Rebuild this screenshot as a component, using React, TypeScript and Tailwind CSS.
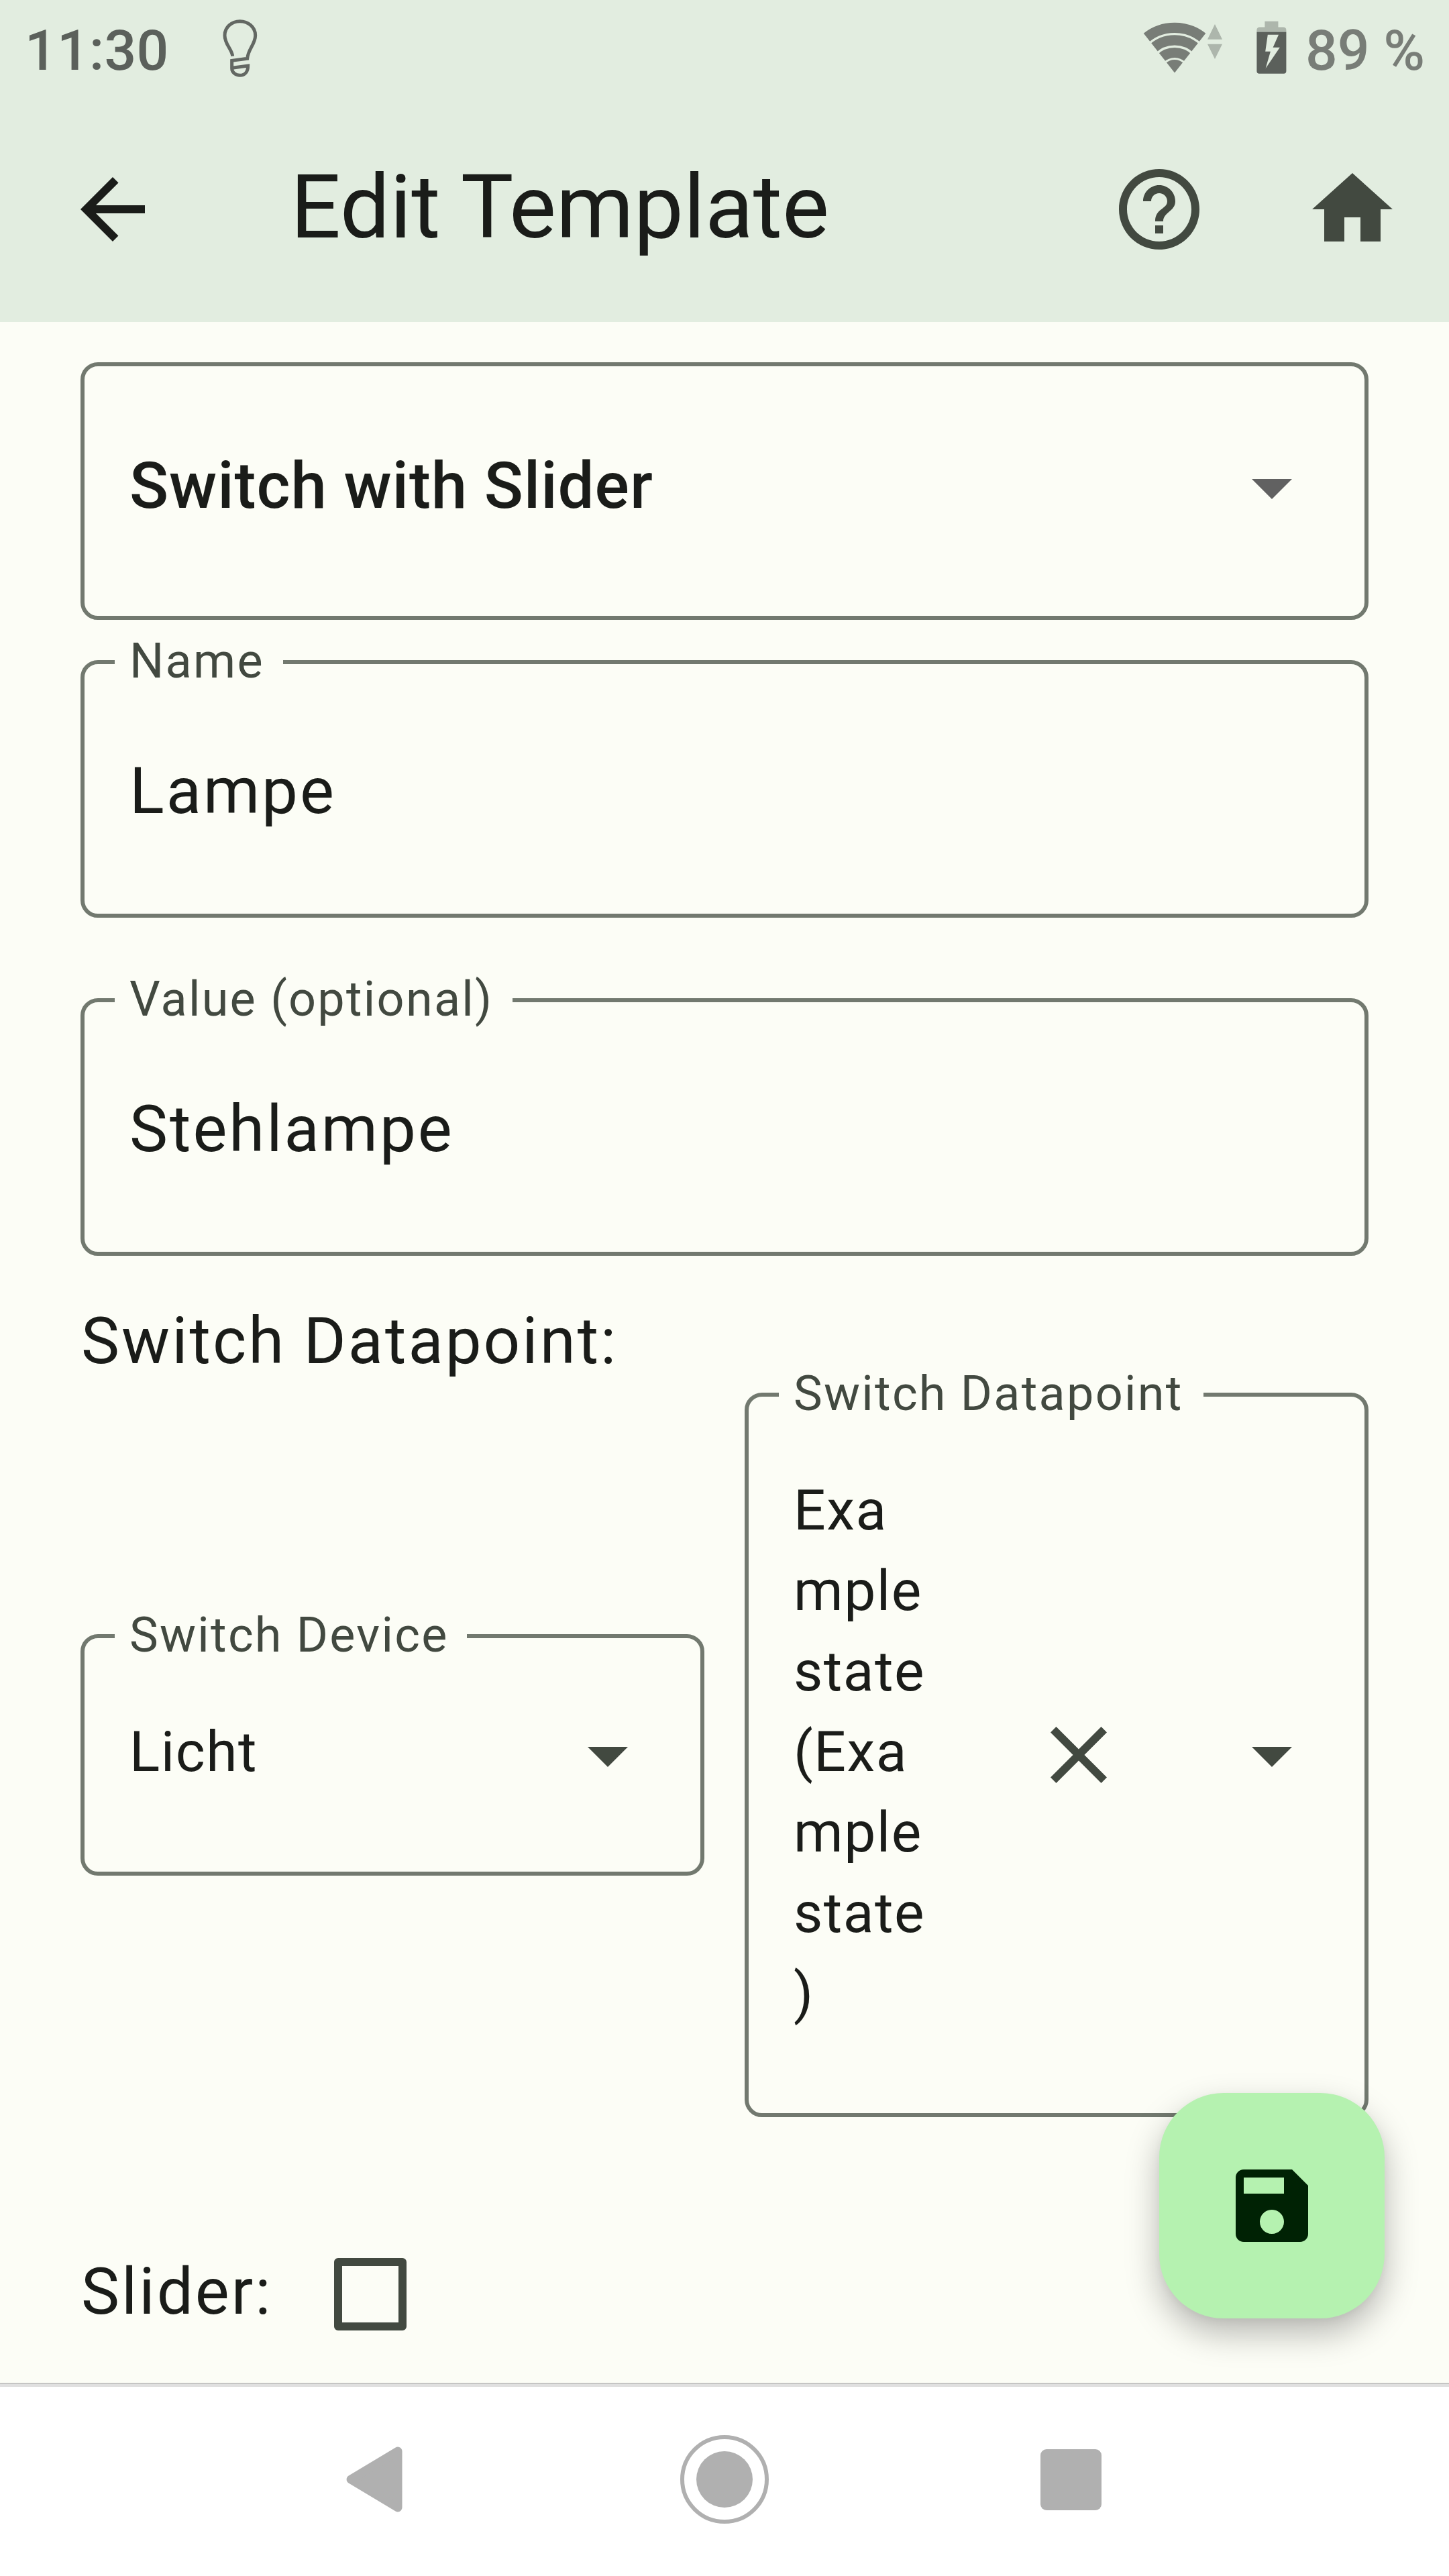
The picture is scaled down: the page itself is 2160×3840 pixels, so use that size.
import type { ReactNode } from "react";

type IconProps = { d: string; className?: string };

function Icon({ d, className = "" }: IconProps) {
  return (
    <svg viewBox="0 0 24 24" className={`size-[144px] shrink-0 fill-current ${className}`}>
      <path d={d} />
    </svg>
  );
}

const ICONS = {
  back: "M20 11H7.83l5.59-5.59L12 4l-8 8 8 8 1.41-1.41L7.83 13H20v-2z",
  help: "M11 18h2v-2h-2v2zm1-16C6.48 2 2 6.48 2 12s4.48 10 10 10 10-4.48 10-10S17.52 2 12 2zm0 18c-4.41 0-8-3.59-8-8s3.59-8 8-8 8 3.59 8 8-3.59 8-8 8zm0-14c-2.21 0-4 1.79-4 4h2c0-1.1.9-2 2-2s2 .9 2 2c0 2-3 1.75-3 5h2c0-2.25 3-2.5 3-5 0-2.21-1.79-4-4-4z",
  home: "M10 20v-6h4v6h5v-8h3L12 3 2 12h3v8z",
  dropDown: "M7 10l5 5 5-5z",
  close: "M19 6.41L17.59 5 12 10.59 6.41 5 5 6.41 10.59 12 5 17.59 6.41 19 12 13.41 17.59 19 19 17.59 13.41 12z",
  save: "M17 3H5c-1.11 0-2 .9-2 2v14c0 1.1.89 2 2 2h14c1.1 0 2-.9 2-2V7l-4-4zm-5 16c-1.66 0-3-1.34-3-3s1.34-3 3-3 3 1.34 3 3-1.34 3-3 3zm3-10H5V5h10v4z",
};

function StatusBar() {
  return (
    <div className="flex h-[144px] items-start pl-[37px] text-[84px] leading-[84px] font-medium">
      <span className="mt-[34px] w-[283px] whitespace-nowrap tracking-[0.3px] text-[#5b605b]">11:30</span>
      <svg viewBox="0 0 240 312" className="mt-[20px] h-[104px] w-[80px] shrink-0" fill="none" stroke="#636863" strokeWidth="15">
        <path d="M80 191C77 160 45 138 45 98C45 62 76 35 113 35C150 35 182 62 182 98C182 137 149 160 146 202L77 211V246C77 264 94 277 113 277C134 277 149 262 149 234L84 243" />
      </svg>
      <svg viewBox="0 0 120 80" className="ml-[1304px] mt-[32px] h-[80px] w-[120px] shrink-0">
        <defs>
          <clipPath id="wifi-wedge">
            <path d="M47 76.5L-1 15.5V0H95V15.5z" />
          </clipPath>
        </defs>
        <g clipPath="url(#wifi-wedge)" fill="none" stroke="#787d77">
          <circle cx="47" cy="76.5" r="67.2" strokeWidth="15.2" />
          <circle cx="47" cy="76.5" r="48.6" strokeWidth="15.2" />
          <circle cx="47" cy="76.5" r="30" strokeWidth="15.2" />
          <circle cx="47" cy="76.5" r="9.7" strokeWidth="19.4" />
        </g>
        <path d="M107 4L118 26.7H96z M96 33.7H118L107 56z" fill="#adb6ac" />
      </svg>
      <svg viewBox="0 0 46 80" className="ml-[49px] mt-[31px] h-[80px] w-[46px] shrink-0">
        <path d="M12 0.8H32V9.5H39.5Q44 9.5 44 14V17H0V14Q0 9.5 4.5 9.5H12z" fill="#adb6ac" transform="translate(0.4 0)" />
        <path
          fillRule="evenodd"
          d="M0 16.8H44V75Q44 78.7 40.3 78.7H3.7Q0 78.7 0 75z M16.4 20.7L12.8 45.7H20.5L13.2 71L34.4 39.7H24.2L32.6 20.7z"
          fill="#5b605b"
          transform="translate(0.4 0)"
        />
      </svg>
      <span className="ml-[27px] mt-[34px] whitespace-nowrap text-[#787d77]">89 %</span>
    </div>
  );
}

function AppBar() {
  return (
    <div className="flex h-[336px] items-center pl-[96px] pr-[72px] text-[#424940]">
      <Icon d={ICONS.back} className="text-[#1a1c19]" />
      <h1 className="mb-[6px] ml-[193px] flex-1 text-[132px] leading-[168px] text-[#1a1c19]">Edit Template</h1>
      <Icon d={ICONS.help} />
      <Icon d={ICONS.home} className="ml-[144px]" />
    </div>
  );
}

function Field({ label, labelWidth, className, children }: { label?: string; labelWidth?: string; className: string; children: ReactNode }) {
  return (
    <div className={`relative flex rounded-[26px] border-[6px] border-[#72796f] pl-[67px] ${className}`}>
      {label && (
        <span
          className={`absolute left-[45px] top-[-46px] h-[84px] bg-[#fcfdf6] pl-[22px] text-[72px] leading-[84px] tracking-[2.25px] whitespace-nowrap text-[#424940] ${labelWidth}`}
        >
          {label}
        </span>
      )}
      {children}
    </div>
  );
}

const STATE_LINES = ["Exa", "mple", "state", "(Exa", "mple", "state", ")"];

function Form() {
  return (
    <main className="relative h-[3072px] bg-[#fcfdf6] px-[120px] pt-[60px] text-[96px] leading-[114px] tracking-[3px] text-[#1a1c19]">
      <Field className="h-[384px] items-center justify-between pr-[66px]">
        <span className="mb-[17px] font-medium tracking-[0.9px]">Switch with Slider</span>
        <Icon d={ICONS.dropDown} className="mb-[12px] text-[#616161]" />
      </Field>
      <Field label="Name" labelWidth="w-[251px]" className="mt-[60px] h-[384px] items-center">
        <span className="mt-[6px]">Lampe</span>
      </Field>
      <Field label="Value (optional)" labelWidth="w-[593px]" className="mt-[120px] h-[384px] items-center">
        <span className="mt-[6px]">Stehlampe</span>
      </Field>

      <p className="ml-px mt-[70px] h-[134px]">Switch Datapoint:</p>

      <div className="flex items-center gap-[60px]">
        <Field label="Switch Device" labelWidth="w-[525px]" className="h-[360px] flex-1 items-center justify-between pr-[66px]">
          <span className="mb-[9px] text-[84px] tracking-[1.5px]">Licht</span>
          <Icon d={ICONS.dropDown} className="text-[#424940]" />
        </Field>
        <Field label="Switch Datapoint" labelWidth="w-[633px]" className="h-[1080px] flex-1 items-center pr-[66px]">
          <div className="flex-1 self-start pt-[110px] text-[84px] leading-[120px] tracking-[1.5px]">
            {STATE_LINES.map((line, i) => (
              <p key={i}>{line}</p>
            ))}
          </div>
          <Icon d={ICONS.close} className="text-[#424940]" />
          <Icon d={ICONS.dropDown} className="ml-[144px] text-[#424940]" />
        </Field>
      </div>

      <div className="mt-[210px] flex h-[108px] items-center">
        <span className="mb-[9px] w-[378px] pl-px">Slider:</span>
        <span className="size-[108px] rounded-[6px] border-[12px] border-[#424940]" />
      </div>

      <button className="absolute bottom-[96px] right-[96px] flex size-[336px] items-center justify-center rounded-[96px] bg-[#b5f2b0] text-[#002204] shadow-[0_22px_50px_rgba(0,0,0,0.28),0_4px_12px_rgba(0,0,0,0.04)]">
        <Icon d={ICONS.save} />
      </button>
    </main>
  );
}

function NavigationBar() {
  return (
    <nav className="h-[288px] border-t border-[#a5a5a2] bg-white">
      <div className="h-[5px] bg-[#e0e0e0]" />
      <div className="flex h-[276px] items-center pl-[510px]">
        <svg viewBox="0 0 96 108" className="h-[108px] w-[96px]">
          <path d="M13 54L83 12V96z" fill="#b0b0b0" stroke="#b0b0b0" strokeWidth="13" strokeLinejoin="round" />
        </svg>
        <span className="ml-[408px] flex size-[132px] items-center justify-center rounded-full border-[6px] border-[#b0b0b0]">
          <span className="size-[84px] rounded-full bg-[#b0b0b0]" />
        </span>
        <span className="ml-[405px] size-[91px] rounded-[9px] bg-[#b0b0b0]" />
      </div>
    </nav>
  );
}

export default function App() {
  return (
    <div className="flex h-[3840px] w-[2160px] flex-col overflow-hidden font-['Roboto',sans-serif]">
      <header className="h-[480px] bg-[#e2ede0]">
        <StatusBar />
        <AppBar />
      </header>
      <Form />
      <NavigationBar />
    </div>
  );
}
